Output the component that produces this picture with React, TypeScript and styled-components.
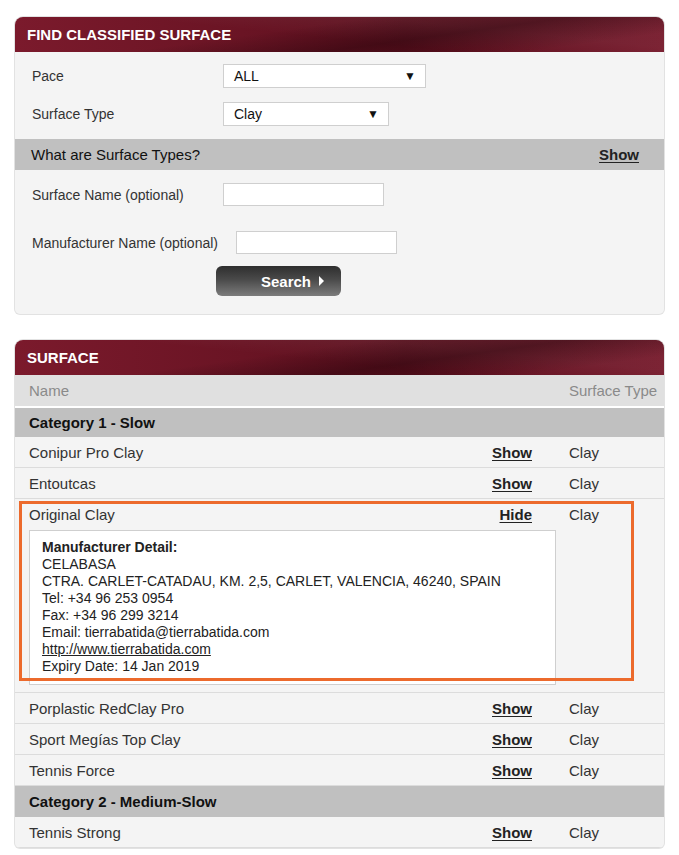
import React from "react";
import styled, { createGlobalStyle } from "styled-components";

const GlobalStyle = createGlobalStyle`
  html, body { margin: 0; padding: 0; background: #ffffff; }
  body { font-family: "Liberation Sans", Arial, sans-serif; color: #222; }
`;

const Page = styled.div`
  padding: 17px 15px 10px 15px;
  width: 649px;
  display: flex;
  flex-direction: column;
  gap: 26px;
`;

const Panel = styled.section`
  width: 649px;
  border-radius: 8px 8px 5px 5px;
  background: #f4f4f4;
  box-shadow: 0 0 0 1px #e2e2e2;
  overflow: hidden;
`;

const PanelHeader = styled.h2`
  margin: 0;
  height: 35px;
  display: flex;
  align-items: center;
  padding-left: 12px;
  color: #fff;
  font-size: 15px;
  font-weight: bold;
  background:
    linear-gradient(172deg, rgba(255,255,255,0) 40%, rgba(20,0,5,0.35) 62%, rgba(255,255,255,0) 85%),
    linear-gradient(186deg, rgba(255,255,255,0.06) 30%, rgba(0,0,0,0) 55%),
    linear-gradient(90deg, #7b1a2c 0%, #6a1424 35%, #5a0f1d 60%, #741628 100%);
`;

const FormBody = styled.div`
  padding: 12px 0 18px 0;
  display: flex;
  flex-direction: column;
`;

const FormRow = styled.div<{ $mt?: number }>`
  display: flex;
  align-items: center;
  padding-left: 17px;
  margin-top: ${(p) => p.$mt ?? 0}px;
`;

const Label = styled.label`
  min-width: 173px;
  padding-right: 18px;
  font-size: 14px;
  color: #333;
`;

const SelectBox = styled.div<{ $w: number }>`
  box-sizing: border-box;
  width: ${(p) => p.$w}px;
  height: 24px;
  background: #fff;
  border: 1px solid #cfcfcf;
  display: flex;
  align-items: center;
  justify-content: space-between;
  padding: 0 9px 0 10px;
  font-size: 14px;
  color: #111;
`;

const Arrow = styled.span`
  font-size: 12px;
  color: #111;
`;

const TextInput = styled.input`
  box-sizing: border-box;
  width: 161px;
  height: 23px;
  border: 1px solid #cfcfcf;
  background: #fff;
  margin: 0;
`;

const InfoBar = styled.div`
  margin-top: 13px;
  height: 31px;
  background: #c0c0c0;
  display: flex;
  align-items: center;
  justify-content: space-between;
  padding: 0 25px 0 16px;
  font-size: 15px;
  color: #111;
`;

const BoldLink = styled.a`
  font-weight: bold;
  font-size: 15px;
  color: #222;
  text-decoration: underline;
  text-underline-offset: 2px;
`;

const ButtonRow = styled.div`
  margin-top: 12px;
  padding-left: 201px;
  display: flex;
`;

const SearchButton = styled.button`
  width: 125px;
  height: 30px;
  border: none;
  border-radius: 6px;
  background: linear-gradient(180deg, #2e2e2e 0%, #4a4a4a 45%, #7c7c7c 100%);
  color: #fff;
  font-family: "Liberation Sans", Arial, sans-serif;
  font-weight: bold;
  font-size: 15px;
  display: flex;
  align-items: center;
  gap: 8px;
  padding: 0 0 0 45px;
`;

const Tri = styled.span`
  width: 0;
  height: 0;
  border-top: 5px solid transparent;
  border-bottom: 5px solid transparent;
  border-left: 5px solid #fff;
`;

const TableHead = styled.div`
  height: 31px;
  background: #e0e0e0;
  display: grid;
  grid-template-columns: 1fr 95px;
  align-items: center;
  padding-left: 14px;
  font-size: 15px;
  color: #8a8a8a;
  border-bottom: 2px solid #fff;
`;

const CategoryRow = styled.div<{ $h?: number }>`
  height: ${(p) => p.$h ?? 29}px;
  background: #c0c0c0;
  display: flex;
  align-items: center;
  padding-left: 14px;
  font-size: 15px;
  font-weight: bold;
  color: #111;
`;

const Row = styled.div`
  position: relative;
  display: grid;
  grid-template-columns: 1fr auto 95px;
  align-items: center;
  padding-left: 14px;
  border-bottom: 1px solid #dcdcdc;
  font-size: 15px;
  color: #333;
`;

const Cell = styled.div`
  height: 30px;
  display: flex;
  align-items: center;
`;

const ActionCell = styled(Cell)`
  padding-right: 37px;
`;

const Detail = styled.div`
  grid-column: 1 / 3;
  margin: 1px 13px 7px 0;
  background: #fff;
  border: 1px solid #cfcfcf;
  padding: 8px 12px 9px 12px;
  font-size: 14px;
  line-height: 17px;
  color: #222;
`;

const DetailTitle = styled.div`
  font-weight: bold;
`;

const PlainLink = styled.a`
  color: #222;
  text-decoration: underline;
`;

const Highlight = styled.div`
  position: absolute;
  top: 2px;
  left: 4px;
  width: 615px;
  height: 180px;
  box-sizing: border-box;
  border: 3px solid #ec6a2c;
  pointer-events: none;
`;

type Item = { name: string; open?: boolean };

const cat1: Item[] = [
  { name: "Conipur Pro Clay" },
  { name: "Entoutcas" },
  { name: "Original Clay", open: true },
  { name: "Porplastic RedClay Pro" },
  { name: "Sport Megías Top Clay" },
  { name: "Tennis Force" },
];

const cat2: Item[] = [{ name: "Tennis Strong" }];

function SurfaceRow({ item }: { item: Item }) {
  return (
    <Row>
      <Cell>{item.name}</Cell>
      <ActionCell>
        <BoldLink>{item.open ? "Hide" : "Show"}</BoldLink>
      </ActionCell>
      <Cell>Clay</Cell>
      {item.open && (
        <>
          <Detail>
            <DetailTitle>Manufacturer Detail:</DetailTitle>
            <div>CELABASA</div>
            <div>CTRA. CARLET-CATADAU, KM. 2,5, CARLET, VALENCIA, 46240, SPAIN</div>
            <div>Tel: +34 96 253 0954</div>
            <div>Fax: +34 96 299 3214</div>
            <div>Email: tierrabatida@tierrabatida.com</div>
            <div>
              <PlainLink>http://www.tierrabatida.com</PlainLink>
            </div>
            <div>Expiry Date: 14 Jan 2019</div>
          </Detail>
          <Highlight />
        </>
      )}
    </Row>
  );
}

export default function App() {
  return (
    <>
      <GlobalStyle />
      <Page>
        <Panel>
          <PanelHeader>FIND CLASSIFIED SURFACE</PanelHeader>
          <FormBody>
            <FormRow>
              <Label>Pace</Label>
              <SelectBox $w={203}>
                <span>ALL</span>
                <Arrow>▼</Arrow>
              </SelectBox>
            </FormRow>
            <FormRow $mt={14}>
              <Label>Surface Type</Label>
              <SelectBox $w={166}>
                <span>Clay</span>
                <Arrow>▼</Arrow>
              </SelectBox>
            </FormRow>
            <InfoBar>
              <span>What are Surface Types?</span>
              <BoldLink>Show</BoldLink>
            </InfoBar>
            <FormRow $mt={13}>
              <Label>Surface Name (optional)</Label>
              <TextInput />
            </FormRow>
            <FormRow $mt={25}>
              <Label>Manufacturer Name (optional)</Label>
              <TextInput />
            </FormRow>
            <ButtonRow>
              <SearchButton>
                Search
                <Tri />
              </SearchButton>
            </ButtonRow>
          </FormBody>
        </Panel>

        <Panel>
          <PanelHeader>SURFACE</PanelHeader>
          <TableHead>
            <span>Name</span>
            <span>Surface Type</span>
          </TableHead>
          <CategoryRow>Category 1 - Slow</CategoryRow>
          {cat1.map((it) => (
            <SurfaceRow key={it.name} item={it} />
          ))}
          <CategoryRow $h={31}>Category 2 - Medium-Slow</CategoryRow>
          {cat2.map((it) => (
            <SurfaceRow key={it.name} item={it} />
          ))}
        </Panel>
      </Page>
    </>
  );
}
